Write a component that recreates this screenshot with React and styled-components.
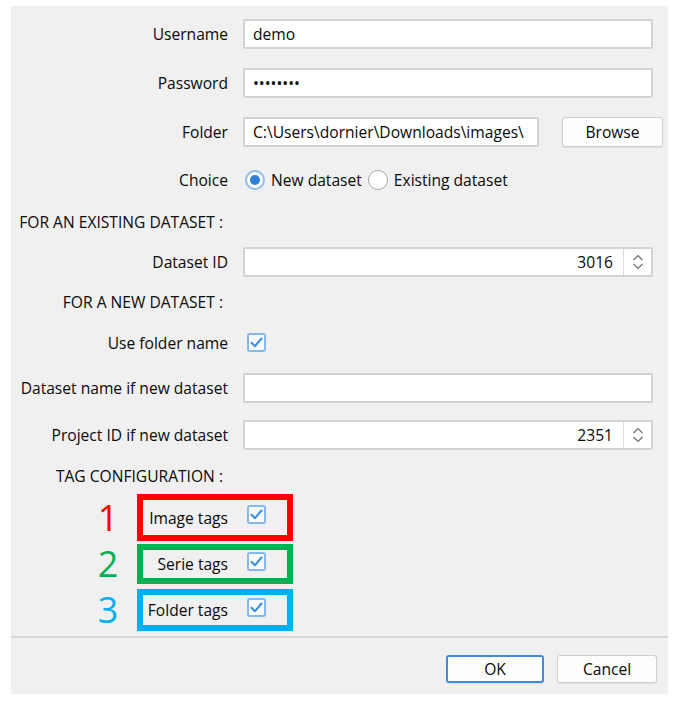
import React from "react";
import styled, { createGlobalStyle } from "styled-components";

const GlobalStyle = createGlobalStyle`
  body {
    margin: 0;
    background: #ffffff;
    font-family: "Open Sans", "Noto Sans", sans-serif;
  }
`;

const Page = styled.div`
  padding: 6px 9px 7px 11px;
`;

const Panel = styled.div`
  width: 657px;
  height: 688px;
  background: #f0f0f0;
  display: flex;
  flex-direction: column;
  box-sizing: border-box;
  padding-top: 3px;
  font-size: 15.6px;
  color: #0a0a0a;
`;

const Form = styled.div`
  display: flex;
  flex-direction: column;
`;

const Row = styled.div`
  display: grid;
  grid-template-columns: 215px 420px;
  column-gap: 15px;
  align-items: center;
  height: ${(p) => p.h}px;
  padding-left: 2px;
`;

const Label = styled.div`
  text-align: right;
  white-space: nowrap;
  padding-right: ${(p) => (p.heading ? 5 : 0)}px;
`;

const Field = styled.div`
  display: flex;
  align-items: center;
`;

const TextBox = styled.input`
  box-sizing: border-box;
  width: ${(p) => p.w || 410}px;
  height: 30px;
  border: 2px solid #d3d3d3;
  border-radius: 2px;
  background: #fff;
  padding: 0 8px;
  font: inherit;
  color: #0a0a0a;
  outline: none;
`;

const Spin = styled.div`
  box-sizing: border-box;
  width: 410px;
  height: 30px;
  border: 2px solid #d3d3d3;
  border-radius: 2px;
  background: #fff;
  display: flex;
  align-items: stretch;
`;

const SpinValue = styled.div`
  flex: 1;
  text-align: right;
  padding-right: 10px;
  line-height: 26px;
`;

const SpinArrows = styled.div`
  width: 27px;
  border-left: 1px solid #dcdcdc;
  display: flex;
  align-items: center;
  justify-content: center;
`;

const Button = styled.button`
  box-sizing: border-box;
  width: ${(p) => p.w}px;
  height: ${(p) => p.h || 30}px;
  margin-left: ${(p) => p.ml || 0}px;
  background: #fdfdfd;
  border: ${(p) => (p.primary ? "2px solid #3d8ee0" : "1px solid #cfcfcf")};
  border-radius: 3px;
  box-shadow: 0 1px 1px rgba(0, 0, 0, 0.08);
  font: inherit;
  color: #0a0a0a;
  padding: 0;
`;

const Options = styled.div`
  display: flex;
  align-items: center;
  padding-left: 2px;
`;

const Radio = styled.span`
  box-sizing: border-box;
  width: 20px;
  height: 20px;
  border-radius: 50%;
  background: #fff;
  border: ${(p) => (p.checked ? "2px solid #8dbcef" : "1px solid #a8a8a8")};
  display: inline-flex;
  align-items: center;
  justify-content: center;
  margin-right: 6px;
  &::after {
    content: "";
    display: ${(p) => (p.checked ? "block" : "none")};
    width: 10px;
    height: 10px;
    border-radius: 50%;
    background: #2f7fd8;
  }
`;

const OptionText = styled.span`
  margin-right: 6px;
`;

const Check = styled.span`
  box-sizing: border-box;
  width: 19px;
  height: 19px;
  border: 2px solid #86b8ec;
  border-radius: 3px;
  background: #f8fbff;
  display: inline-flex;
  align-items: center;
  justify-content: center;
  margin-left: ${(p) => p.ml || 0}px;
  margin-bottom: ${(p) => p.mb || 0}px;
`;

const Tags = styled.div`
  display: flex;
  flex-direction: column;
  padding-left: 79px;
`;

const TagRow = styled.div`
  display: flex;
  align-items: center;
  margin-top: ${(p) => p.mt || 0}px;
`;

const Num = styled.div`
  width: 36px;
  margin-right: 11px;
  text-align: center;
  font-size: 36px;
  line-height: 1;
  color: ${(p) => p.color};
`;

const TagBox = styled.div`
  box-sizing: border-box;
  width: 156px;
  height: ${(p) => p.h}px;
  border: 6px solid ${(p) => p.color};
  display: flex;
  align-items: center;
`;

const TagLabel = styled.div`
  width: 85px;
  text-align: right;
  white-space: nowrap;
`;

const Footer = styled.div`
  margin-top: auto;
  border-top: 2px solid #d6d6d6;
  display: flex;
  justify-content: flex-end;
  padding: 17px 11px 11px 0;
`;

const CheckMark = () => (
  <svg width="13" height="11" viewBox="0 0 13 11">
    <path d="M1.5 5.8 L5 9.2 L11.5 1.5" fill="none" stroke="#3b8ce0" strokeWidth="2" strokeLinecap="round" strokeLinejoin="round" />
  </svg>
);

const SpinIcon = () => (
  <svg width="12" height="18" viewBox="0 0 12 18">
    <path d="M1.5 7 L6 2.5 L10.5 7 M1.5 11 L6 15.5 L10.5 11" fill="none" stroke="#707070" strokeWidth="1.2" />
  </svg>
);

const tags = [
  { n: "1", label: "Image tags", color: "#ff0000", h: 47, mt: 0, mb: 6 },
  { n: "2", label: "Serie tags", color: "#00b050", h: 40, mt: 3, mb: 5 },
  { n: "3", label: "Folder tags", color: "#00b0f0", h: 42, mt: 5, mb: 6 },
];

const App = () => {
  return (
    <>
      <GlobalStyle />
      <Page>
        <Panel>
          <Form>
            <Row h={49}>
              <Label>Username</Label>
              <Field><TextBox readOnly value="demo" /></Field>
            </Row>
            <Row h={49}>
              <Label>Password</Label>
              <Field><TextBox readOnly type="password" value="password" /></Field>
            </Row>
            <Row h={50}>
              <Label>Folder</Label>
              <Field>
                <TextBox w={296} readOnly value={"C:\\Users\\dornier\\Downloads\\images\\"} />
                <Button w={101} ml={23}>Browse</Button>
              </Field>
            </Row>
            <Row h={45}>
              <Label>Choice</Label>
              <Options>
                <Radio checked />
                <OptionText>New dataset</OptionText>
                <Radio />
                <OptionText>Existing dataset</OptionText>
              </Options>
            </Row>
            <Row h={39}>
              <Label heading>FOR AN EXISTING DATASET :</Label>
            </Row>
            <Row h={41}>
              <Label>Dataset ID</Label>
              <Spin>
                <SpinValue>3016</SpinValue>
                <SpinArrows><SpinIcon /></SpinArrows>
              </Spin>
            </Row>
            <Row h={39}>
              <Label heading>FOR A NEW DATASET :</Label>
            </Row>
            <Row h={43}>
              <Label>Use folder name</Label>
              <Options>
                <Check ml={2}><CheckMark /></Check>
              </Options>
            </Row>
            <Row h={48}>
              <Label>Dataset name if new dataset</Label>
              <Field><TextBox readOnly value="" /></Field>
            </Row>
            <Row h={46}>
              <Label>Project ID if new dataset</Label>
              <Spin>
                <SpinValue>2351</SpinValue>
                <SpinArrows><SpinIcon /></SpinArrows>
              </Spin>
            </Row>
            <Row h={36}>
              <Label heading>TAG CONFIGURATION :</Label>
            </Row>
          </Form>
          <Tags>
            {tags.map((t) => (
              <TagRow key={t.n} mt={t.mt}>
                <Num color={t.color}>{t.n}</Num>
                <TagBox color={t.color} h={t.h}>
                  <TagLabel>{t.label}</TagLabel>
                  <Check ml={19} mb={t.mb}><CheckMark /></Check>
                </TagBox>
              </TagRow>
            ))}
          </Tags>
          <Footer>
            <Button primary w={98} h={28}>OK</Button>
            <Button w={100} h={28} ml={13}>Cancel</Button>
          </Footer>
        </Panel>
      </Page>
    </>
  );
};

export default App;
